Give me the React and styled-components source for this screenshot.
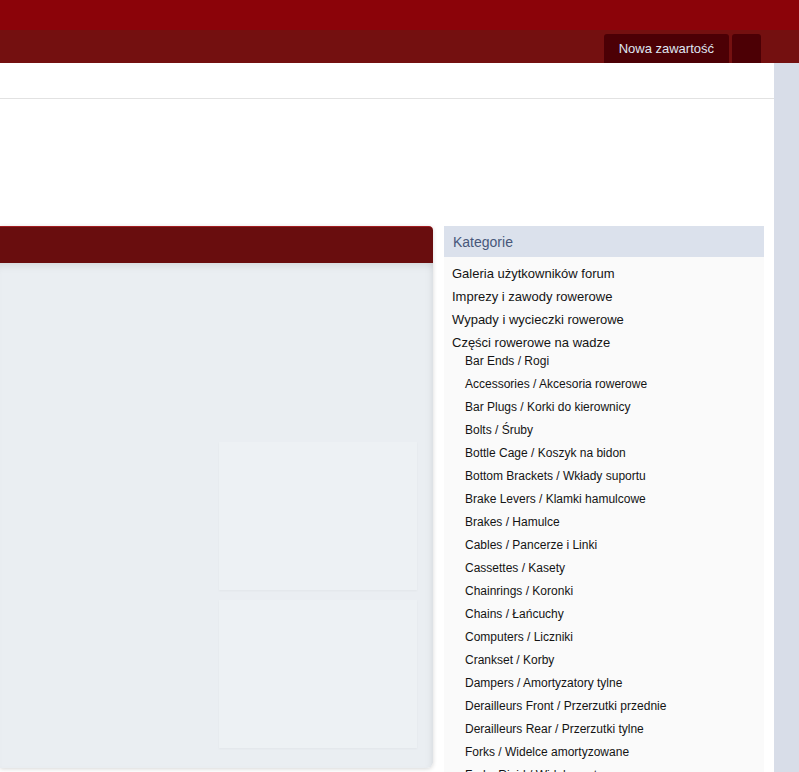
import React from "react";
import styled, { createGlobalStyle } from "styled-components";

const GlobalStyle = createGlobalStyle`
  html, body {
    margin: 0;
    padding: 0;
    height: 772px;
    overflow: hidden;
    background: #d8dde8;
    font-family: "Liberation Sans", Arial, sans-serif;
  }
`;

const topLevel = [
  "Galeria użytkowników forum",
  "Imprezy i zawody rowerowe",
  "Wypady i wycieczki rowerowe",
  "Części rowerowe na wadze",
];

const parts = [
  "Bar Ends / Rogi",
  "Accessories / Akcesoria rowerowe",
  "Bar Plugs / Korki do kierownicy",
  "Bolts / Śruby",
  "Bottle Cage / Koszyk na bidon",
  "Bottom Brackets / Wkłady suportu",
  "Brake Levers / Klamki hamulcowe",
  "Brakes / Hamulce",
  "Cables / Pancerze i Linki",
  "Cassettes / Kasety",
  "Chainrings / Koronki",
  "Chains / Łańcuchy",
  "Computers / Liczniki",
  "Crankset / Korby",
  "Dampers / Amortyzatory tylne",
  "Derailleurs Front / Przerzutki przednie",
  "Derailleurs Rear / Przerzutki tylne",
  "Forks / Widelce amortyzowane",
  "Forks Rigid / Widelce sztywne",
  "Frames / Ramy",
];

const App = () => {
  return (
    <Page>
      <GlobalStyle />
      <TopBar />
      <NavBar>
        <NavButton>Nowa zawartość</NavButton>
        <NavButton square />
      </NavBar>
      <Main>
        <SubStrip />
        <Content>
          <Panel>
            <PanelHeader />
            <PanelBody>
              <Tile />
              <Tile />
            </PanelBody>
          </Panel>
          <Sidebar>
            <SidebarHeader>Kategorie</SidebarHeader>
            <CategoryList>
              {topLevel.map((name) => (
                <Category key={name}>{name}</Category>
              ))}
              <SubList>
                {parts.map((name) => (
                  <SubCategory key={name}>{name}</SubCategory>
                ))}
              </SubList>
            </CategoryList>
          </Sidebar>
        </Content>
      </Main>
    </Page>
  );
};

export default App;

const Page = styled.div`
  height: 772px;
  overflow: hidden;
  background: #d8dde8;
`;

const TopBar = styled.div`
  height: 30px;
  background: #8b0309;
`;

const NavBar = styled.div`
  height: 33px;
  background: #741010;
  display: flex;
  align-items: flex-end;
  justify-content: flex-end;
  gap: 3px;
  padding-right: 38px;
`;

const NavButton = styled.div`
  height: 29px;
  box-sizing: border-box;
  width: ${(p) => (p.square ? "29px" : "auto")};
  padding: ${(p) => (p.square ? "0" : "0 15px")};
  background: #4c0005;
  border-radius: 3px 3px 0 0;
  color: #dfe6f2;
  font-size: 13px;
  display: flex;
  align-items: center;
`;

const Main = styled.div`
  width: 774px;
  background: #ffffff;
  height: 709px;
`;

const SubStrip = styled.div`
  height: 35px;
  border-bottom: 1px solid #e2e2e2;
`;

const Content = styled.div`
  display: flex;
  gap: 11px;
  padding-top: 127px;
  padding-right: 10px;
`;

const Panel = styled.div`
  width: 433px;
  height: 542px;
  display: flex;
  flex-direction: column;
  border-radius: 0 4px 6px 0;
  box-shadow: 0 1px 4px rgba(0, 0, 0, 0.16);
  overflow: hidden;
`;

const PanelHeader = styled.div`
  height: 36px;
  background: #690d0e;
  border-top: 1px solid #a01c20;
  border-radius: 0 4px 0 0;
`;

const PanelBody = styled.div`
  flex: 1;
  background: #eaeef2;
  box-shadow: inset 0 8px 8px -6px rgba(0, 0, 0, 0.1),
    inset -6px 0 8px -6px rgba(0, 0, 0, 0.1);
  display: flex;
  flex-direction: column;
  align-items: flex-end;
  gap: 10px;
  padding: 179px 16px 0 0;
`;

const Tile = styled.div`
  width: 198px;
  height: 148px;
  background: #edf1f4;
  box-shadow: 0 1px 2px rgba(0, 0, 0, 0.04);
`;

const Sidebar = styled.div`
  width: 320px;
  background: #fafafa;
  align-self: flex-start;
`;

const SidebarHeader = styled.div`
  height: 31px;
  background: #dbe1ec;
  color: #47577a;
  font-size: 14px;
  padding-left: 9px;
  display: flex;
  align-items: center;
`;

const CategoryList = styled.div`
  padding-top: 5px;
  display: flex;
  flex-direction: column;
`;

const Category = styled.div`
  line-height: 23px;
  font-size: 13px;
  color: #141414;
  padding-left: 8px;
`;

const SubList = styled.div`
  margin-top: -4px;
  display: flex;
  flex-direction: column;
`;

const SubCategory = styled.div`
  line-height: 23px;
  font-size: 12px;
  color: #141414;
  padding-left: 21px;
`;
